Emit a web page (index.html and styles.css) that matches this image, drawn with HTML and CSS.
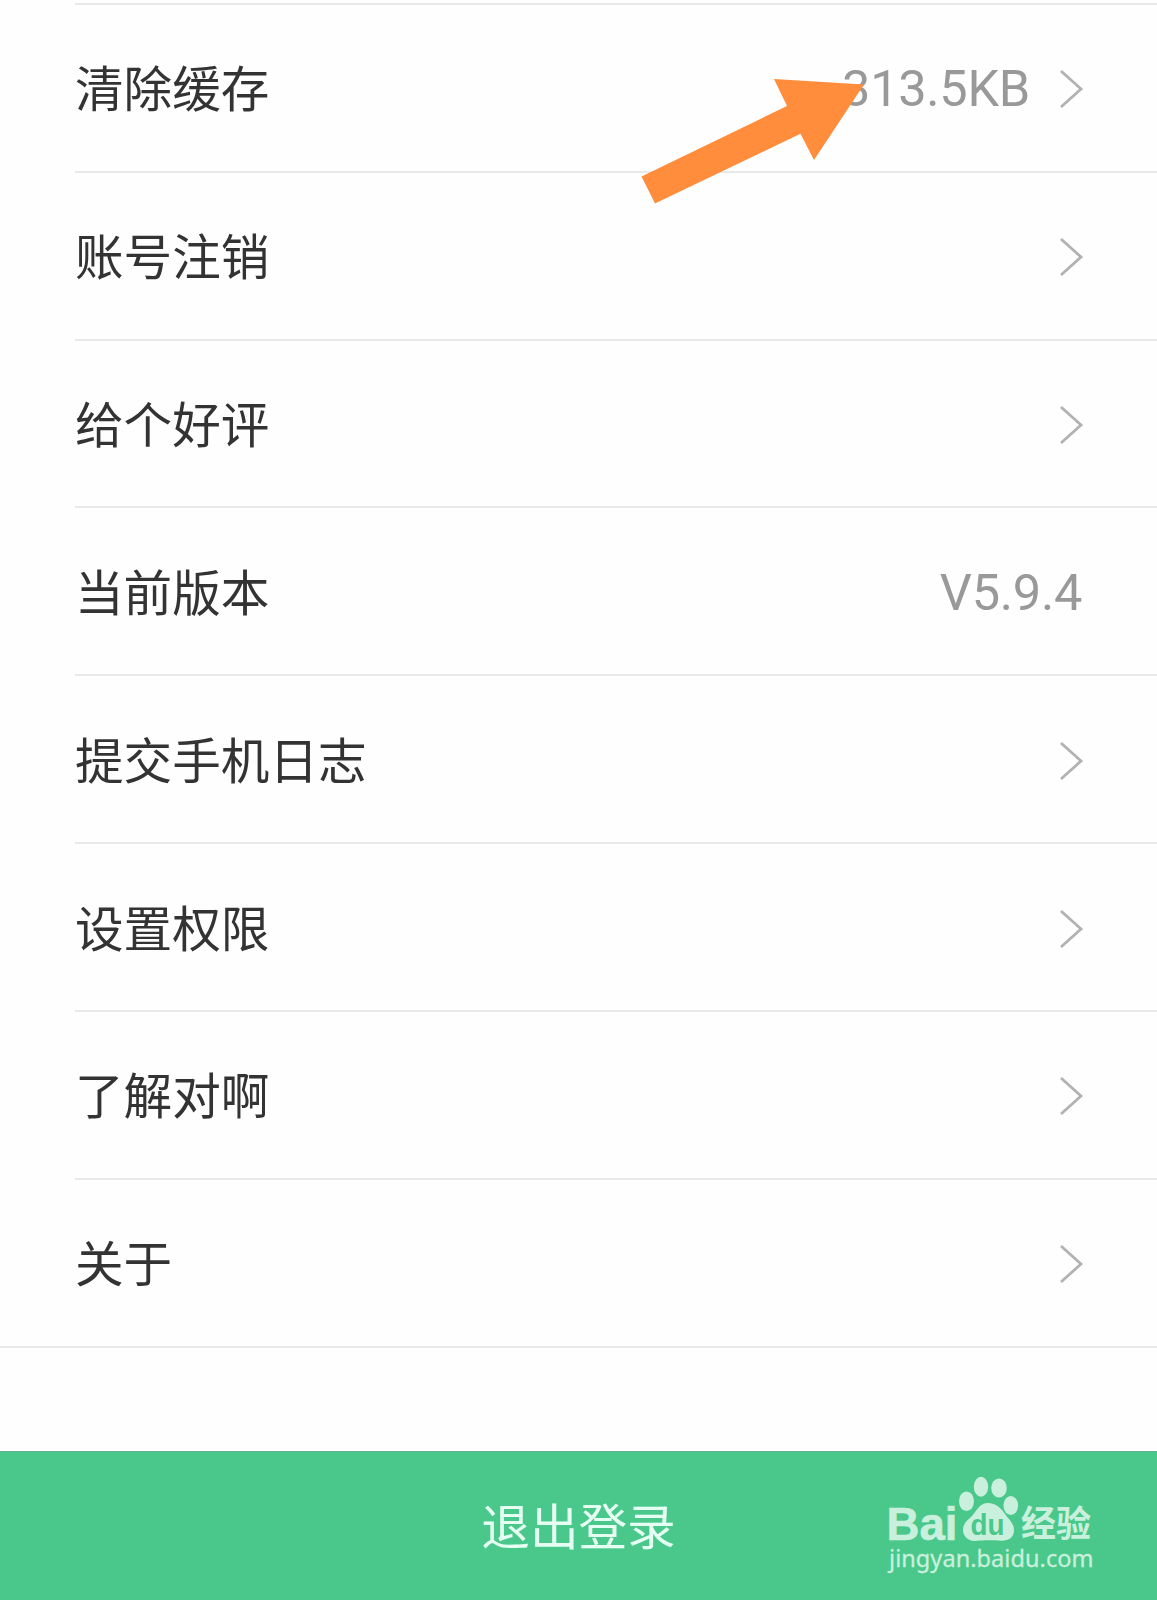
FILE: index.html
```
<!DOCTYPE html>
<html lang="zh-CN">
	<head>
		<meta charset="UTF-8" />
		<meta name="viewport" content="width=device-width, initial-scale=1.0" />
		<title>设置</title>
		<link rel="stylesheet" href="styles.css">
	</head>
	<body>
		<div class="page">
			<ul class="settings">
				<li class="row">
					<span class="label">清除缓存</span>
					<span class="value size">313.5KB</span>
					<svg class="chevron" viewBox="0 0 24 40"><path d="M1 2L21 20L1 38" /></svg>
				</li>
				<li class="row">
					<span class="label">账号注销</span>
					<svg class="chevron" viewBox="0 0 24 40"><path d="M1 2L21 20L1 38" /></svg>
				</li>
				<li class="row">
					<span class="label">给个好评</span>
					<svg class="chevron" viewBox="0 0 24 40"><path d="M1 2L21 20L1 38" /></svg>
				</li>
				<li class="row">
					<span class="label">当前版本</span>
					<span class="value version">V5.9.4</span>
				</li>
				<li class="row">
					<span class="label">提交手机日志</span>
					<svg class="chevron" viewBox="0 0 24 40"><path d="M1 2L21 20L1 38" /></svg>
				</li>
				<li class="row">
					<span class="label">设置权限</span>
					<svg class="chevron" viewBox="0 0 24 40"><path d="M1 2L21 20L1 38" /></svg>
				</li>
				<li class="row">
					<span class="label">了解对啊</span>
					<svg class="chevron" viewBox="0 0 24 40"><path d="M1 2L21 20L1 38" /></svg>
				</li>
				<li class="row">
					<span class="label">关于</span>
					<svg class="chevron" viewBox="0 0 24 40"><path d="M1 2L21 20L1 38" /></svg>
				</li>
			</ul>
			<button class="logout">退出登录</button>

			<!-- pointer to the cache size -->
			<svg class="arrow" viewBox="0 0 224 130">
				<path d="M134 1L224 6.5L174 82L160.5 55.7L15 125.5L1.5 98.5L147 28Z" />
			</svg>

			<svg class="watermark" viewBox="0 0 220 110">
				<text class="brand" x="6.5" y="69.5" textLength="71" lengthAdjust="spacingAndGlyphs">Bai</text>
				<ellipse cx="86.5" cy="31.3" rx="7.5" ry="9.8" />
				<ellipse cx="101" cy="16.8" rx="7.2" ry="10" />
				<ellipse cx="119" cy="18" rx="7.8" ry="9.6" />
				<ellipse cx="130.8" cy="35.5" rx="7.3" ry="9.6" />
				<path d="M108 33C116 33 121 38 125 44C129 50 134 53 134 60C134 68 128 71 121 70.7C115 70 102 70 97 70.7C88 72 83 66 83 60C83 53 88 50 92 46C97 40 100 33 108 33Z" />
				<text class="du" x="90.5" y="65" textLength="34" lengthAdjust="spacingAndGlyphs">du</text>
				<text class="cn" x="141" y="66.5" textLength="70" lengthAdjust="spacingAndGlyphs">经验</text>
				<text class="url" x="9" y="97" textLength="204.5" lengthAdjust="spacing">jingyan.baidu.com</text>
			</svg>
		</div>
	</body>
</html>
```
FILE: styles.css
```
* {
	box-sizing: border-box;
}
body {
	margin: 0;
	background-color: #fefefe;
	font-family: "Noto Sans CJK SC", sans-serif;
}
.page {
	position: relative;
	display: flex;
	flex-direction: column;
	height: 1600px;
	padding-top: 3px;
	overflow: hidden;
}
.settings {
	margin: 0;
	padding: 0;
	list-style: none;
	border-bottom: 2px solid #e9e9e9;
}
.row {
	display: flex;
	align-items: center;
	height: 167.83px;
	margin-left: 75px;
	padding-right: 73px;
	border-top: 2px solid #e9e9e9;
}
.label {
	flex: 1;
	padding-bottom: 3px;
	color: #333;
	font-size: 48.6px;
	line-height: 72px;
}
.value {
	padding-top: 3px;
	color: #999;
	font-family: Roboto, sans-serif;
	font-size: 50.5px;
	line-height: 60px;
	letter-spacing: -0.3px;
}
.size {
	margin-right: 30px;
}
.version {
	margin-right: 2px;
}
.chevron {
	width: 24px;
	height: 40px;
	margin-top: 3px;
	fill: none;
	stroke: #b2b2b2;
	stroke-width: 2.8;
}
.logout {
	height: 149px;
	margin-top: auto;
	padding: 0 0 5px;
	border: none;
	border-top: 1px solid #62b592;
	background-color: #4ac88b;
	color: #e6fff3;
	font-family: inherit;
	font-size: 48.6px;
	line-height: 72px;
}
.arrow {
	position: absolute;
	top: 78px;
	left: 640px;
	width: 224px;
	height: 130px;
	fill: #ff8d3c;
}
.watermark {
	position: absolute;
	top: 1470px;
	left: 880px;
	width: 220px;
	height: 110px;
	fill: #c9f0dc;
}
.brand {
	font: bold 47px "Liberation Sans", sans-serif;
	stroke: #c9f0dc;
	stroke-width: 0.6;
}
.du {
	fill: #4ac88b;
	font: bold 29px "Liberation Sans", sans-serif;
}
.cn {
	font: bold 36px "Noto Sans CJK SC", sans-serif;
}
.url {
	font: 23.5px "Noto Sans", sans-serif;
	stroke: #c9f0dc;
	stroke-width: 0.3;
}
```
